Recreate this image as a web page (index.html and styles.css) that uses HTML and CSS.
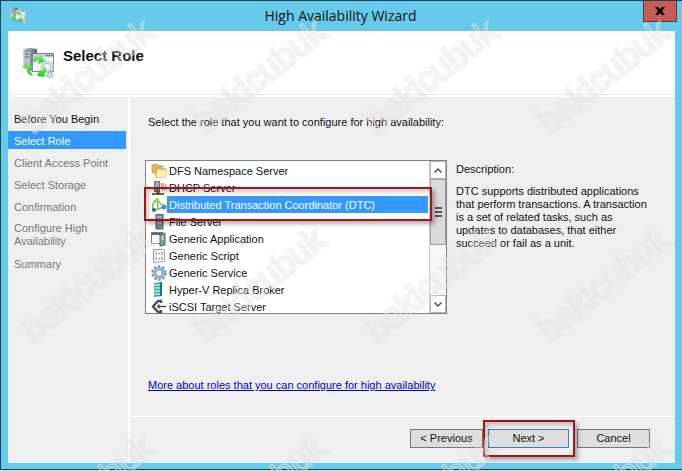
FILE: index.html
```html
<!DOCTYPE html>
<html lang="en">
<head>
    <meta charset="UTF-8">
    <meta name="viewport" content="width=device-width, initial-scale=1.0">
    <title>High Availability Wizard</title>
    <link rel="stylesheet" href="styles.css">
</head>
<body>
<div class="window">
    <div class="titlebar">
        <svg class="title-icon" viewBox="0 0 32 32"><use href="#wizard-icon"/></svg>
        <span class="title">High Availability Wizard</span>
        <button type="button" class="close" aria-label="Close">
            <svg width="10" height="8" viewBox="0 0 10 8"><path d="M0 0h3l2 2 2-2h3L7 4l3 4H7L5 6 3 8H0l3-4z" fill="#000"/></svg>
        </button>
    </div>

    <div class="content">
        <header class="header">
            <svg class="header-icon" viewBox="0 0 32 32">
                <defs>
                    <linearGradient id="metal"><stop offset="0" stop-color="#d5d9dc"/><stop offset="0.5" stop-color="#8d969e"/><stop offset="1" stop-color="#59636d"/></linearGradient>
                    <linearGradient id="green" x2="0" y2="1"><stop offset="0" stop-color="#8cf06a"/><stop offset="1" stop-color="#22c322"/></linearGradient>
                </defs>
                <g id="wizard-icon">
                    <path d="M1 2l7-1 7 1v21l-6 1-8-3z" fill="url(#metal)"/>
                    <path d="M2 3h6v18l-6-1z" fill="#bcc3c9"/>
                    <path d="M3 4h4M3 7h4M3 10h4" stroke="#555f68"/>
                    <rect x="10.500" y="6.500" width="21" height="18" fill="#f7f9fc" stroke="#7d8594"/>
                    <path d="M11 7h20v3H11z" fill="#c5cfe2"/>
                    <path d="M24 8.500h1.500M26.500 8.500h1.500M29 8.500h1.500" stroke="#4b556b" stroke-width="1.500"/>
                    <circle cx="25" cy="20" r="4" fill="none" stroke="#c3d2e1" stroke-width="2.500"/>
                    <circle cx="25" cy="20" r="6" fill="none" stroke="#b4c5d6" stroke-width="1.600" stroke-dasharray="2 1.500"/>
                    <circle cx="28" cy="28" r="2.500" fill="#e8eef4" stroke="#9fb2c6" stroke-width="2" stroke-dasharray="2 1"/>
                    <path d="M11 11c3-2 5-2 7-1l1-2 4 6-7 3 1-3c-2-1-3 0-5 2z" fill="url(#green)"/>
                    <path d="M11 29c-5-1-7-4-6-8l-5 0 5-6 6 6-3 0c0 3 1 5 3 8z" fill="url(#green)"/>
                    <path d="M24 19c1 4 0 7-2 9l2 2-9-1 3-7 1 2c2-1 3-3 5-5z" fill="url(#green)"/>
                </g>
            </svg>
            <h1>Select Role</h1>
        </header>

        <div class="columns">
            <nav class="steps">
                <ol>
                    <li class="done">Before You Begin</li>
                    <li class="active" aria-current="step">Select Role</li>
                    <li>Client Access Point</li>
                    <li>Select Storage</li>
                    <li>Confirmation</li>
                    <li class="two-lines">Configure High<br>Availability</li>
                    <li>Summary</li>
                </ol>
            </nav>

            <div class="page">
                <main class="main">
                    <p class="prompt" id="prompt">Select the role that you want to configure for high availability:</p>
                    <div class="role-area">
                        <div class="list-wrap">
                            <div class="list" role="radiogroup" aria-labelledby="prompt">
                                <div class="roles">
                                    <label class="role">
                                        <input type="radio" name="role">
                                        <svg viewBox="0 0 16 16"><path d="M1 2l5-1 1 2h3v7H1z" fill="#e9b94a" stroke="#b98b2d" stroke-width="0.600"/><path d="M5 6l4-1 1 1h5v8H5z" fill="#fbe28c" stroke="#bb8f35" stroke-width="0.800"/><path d="M6 8h9v6H6z" fill="#fff0af"/><path d="M8 3h4v3" fill="none" stroke="#7795b8"/></svg>
                                        <span>DFS Namespace Server</span>
                                    </label>
                                    <label class="role">
                                        <input type="radio" name="role">
                                        <svg viewBox="0 0 16 16"><path d="M3 1h6v11H3z" fill="#717c84"/><path d="M4 3h4M4 5h4M4 7h4" stroke="#d5dadd"/><path d="M1 14h12" stroke="#8c6924" stroke-width="2"/><path d="M7 11v4" stroke="#5b4a2d" stroke-width="3"/><path d="M10 3l2 7M12 3l1 6M15 4l-1 6" stroke="#d56a39"/></svg>
                                        <span>DHCP Server</span>
                                    </label>
                                    <label class="role selected">
                                        <input type="radio" name="role" checked>
                                        <svg viewBox="0 0 16 16"><path d="M6 3C2 5 1 8 2 12M6 3l7 7M4 13l9-3M6 3l1 8" fill="none" stroke="#72b944" stroke-width="1.400"/><circle cx="6" cy="3" r="2" fill="#8bd34a"/><circle cx="3" cy="13" r="2" fill="#2c6fad"/><circle cx="13" cy="10" r="2.500" fill="#3a9cad"/></svg>
                                        <span>Distributed Transaction Coordinator (DTC)</span>
                                    </label>
                                    <label class="role">
                                        <input type="radio" name="role">
                                        <svg viewBox="0 0 16 16"><path d="M5 0h7v15H5z" fill="#77858f" stroke="#4a565f"/><path d="M6 3h5M6 6h5M6 9h5" stroke="#dbe2e6"/><path d="M9 12h2v2H9z" fill="#56bd47"/></svg>
                                        <span>File Server</span>
                                    </label>
                                    <label class="role">
                                        <input type="radio" name="role">
                                        <svg viewBox="0 0 16 16"><rect x="0.500" y="1.500" width="11" height="11" fill="#fff" stroke="#6c7c88"/><path d="M1 3h10" stroke="#52687c" stroke-width="2"/><path d="M9 3l5-1v12l-5 1z" fill="#8b9ba6" stroke="#52626d"/><path d="M10 6h3M10 8h3" stroke="#e9eef1"/><path d="M11 12h2" stroke="#4fc444" stroke-width="2"/></svg>
                                        <span>Generic Application</span>
                                    </label>
                                    <label class="role">
                                        <input type="radio" name="role">
                                        <svg viewBox="0 0 16 16"><path d="M2.500 1.500h10l1 1v11l-11 1z" fill="#fafafa" stroke="#9ba2a6"/><path d="M6 4L4 5.500 6 7M10 4l2 1.500L10 7M6 9l-2 1.500L6 12M10 9l2 1.500-2 1.500M7 5.500h2M7 10.500h2" fill="none" stroke="#777" stroke-width="0.800"/></svg>
                                        <span>Generic Script</span>
                                    </label>
                                    <label class="role">
                                        <input type="radio" name="role">
                                        <svg viewBox="0 0 16 16"><circle cx="8" cy="8" r="6.500" fill="none" stroke="#7396b4" stroke-width="2.600" stroke-dasharray="2.500 1.600"/><circle cx="8" cy="8" r="4.400" fill="none" stroke="#8fb2cf" stroke-width="2.800"/><circle cx="8" cy="8" r="2.800" fill="#fff" stroke="#668aa9" stroke-width="0.600"/></svg>
                                        <span>Generic Service</span>
                                    </label>
                                    <label class="role">
                                        <input type="radio" name="role">
                                        <svg viewBox="0 0 16 16"><path d="M3 1l8-1v14l-8 1z" fill="#37a7b3"/><path d="M3 3h6M3 6h6M3 9h6M3 12h6" stroke="#b8edf0" stroke-width="1.400"/><path d="M9 0h2v14H9z" fill="#23727c"/></svg>
                                        <span>Hyper-V Replica Broker</span>
                                    </label>
                                    <label class="role">
                                        <input type="radio" name="role">
                                        <svg viewBox="0 0 16 16"><path d="M10 4V2H7L2 7.500 7 13h3v-2" fill="none" stroke="#4b4b4b" stroke-width="2.400"/><path d="M6 7.500h9M8 5.500v4" stroke="#4b4b4b" stroke-width="1.600"/></svg>
                                        <span>iSCSI Target Server</span>
                                    </label>
                                </div>
                                <div class="scrollbar">
                                    <button type="button" aria-label="Scroll up"><svg width="8" height="5" viewBox="0 0 8 5"><path d="M0.500 4.500L4 1l3.500 3.500" fill="none" stroke="#505050" stroke-width="1.500"/></svg></button>
                                    <div class="thumb"></div>
                                    <button type="button" aria-label="Scroll down"><svg width="8" height="5" viewBox="0 0 8 5"><path d="M0.500 0.500L4 4 7.500 0.500" fill="none" stroke="#505050" stroke-width="1.500"/></svg></button>
                                </div>
                            </div>
                            <div class="callout callout-role"></div>
                        </div>
                        <section class="description">
                            <h2>Description:</h2>
                            <p>DTC supports distributed applications<br>that perform transactions. A transaction<br>is a set of related tasks, such as<br>updates to databases, that either<br>succeed or fail as a unit.</p>
                        </section>
                    </div>
                    <a class="more" href="#">More about roles that you can configure for high availability</a>
                </main>
                <footer class="footer">
                    <button type="button" class="btn">&lt; Previous</button>
                    <div class="next-wrap">
                        <button type="button" class="btn btn-next">Next &gt;</button>
                        <div class="callout callout-next"></div>
                    </div>
                    <button type="button" class="btn">Cancel</button>
                </footer>
            </div>
        </div>
    </div>
</div>

<svg class="watermark" aria-hidden="true">
    <defs>
        <pattern id="mark" x="10" y="0" width="172" height="208" patternUnits="userSpaceOnUse">
            <g transform="translate(23 135) rotate(-39)">
                <text class="mark-edge" x="0" y="0">bakicubuk</text>
                <text class="mark-light" x="0" y="0">bakicubuk</text>
            </g>
        </pattern>
    </defs>
    <rect width="100%" height="100%" fill="url(#mark)"/>
</svg>
</body>
</html>
```

FILE: styles.css
```css
* {
    margin: 0;
    padding: 0;
    box-sizing: border-box;
}

body {
    min-height: 100vh;
    display: flex;
    flex-direction: column;
    position: relative;
    overflow-x: hidden;
    background-color: #d5d9dc;
    font-family: "Liberation Sans", Arial, sans-serif;
    font-size: 11px;
    line-height: 13px;
    color: #111;
}

button {
    font: inherit;
    color: inherit;
}

/* Window frame */
.window {
    flex: 1;
    display: flex;
    flex-direction: column;
    margin-bottom: 1px;
    padding: 0 7px 6px;
    background-color: #66caea;
    border: 1px solid #1d4355;
    border-right: 0;
}

.titlebar {
    height: 30px;
    display: flex;
    align-items: flex-start;
    justify-content: space-between;
}

.title-icon {
    width: 16px;
    height: 16px;
    margin: 6px 12px 0 2px;
}

.title {
    font-family: "Open Sans", "Noto Sans", sans-serif;
    font-size: 14px;
    line-height: 30px;
}

.close {
    width: 34px;
    height: 21px;
    margin-right: -2px;
    background-color: #c75c54;
    border: 1px solid #6b3434;
    border-top: 0;
}

.content {
    flex: 1;
    display: flex;
    flex-direction: column;
    background-color: #fff;
}

.header {
    height: 64px;
    display: flex;
    align-items: center;
    padding-left: 14px;
    gap: 9px;
    border-bottom: 1px solid #e6e6e6;
}

.header-icon {
    width: 32px;
    height: 32px;
}

.header h1 {
    font-size: 15px;
    line-height: 18px;
    padding-bottom: 14px;
}

/* Steps on the left, page on the right */
.columns {
    flex: 1;
    display: flex;
    gap: 2px;
    margin-top: 2px;
}

.steps {
    width: 120px;
    padding: 12px 2px 0 0;
    background-color: #efefef;
    color: #777;
}

.steps ol {
    list-style: none;
}

.steps li {
    padding: 2px 6px 0;
    margin-bottom: 4px;
    line-height: 16px;
}

.steps .done {
    color: #111;
}

.steps .active {
    background-color: #3399ff;
    color: #fff;
}

.steps .two-lines {
    padding: 3px 6px 2px;
    line-height: 13px;
}

.page {
    flex: 1;
    display: flex;
    flex-direction: column;
    gap: 1px;
}

.main {
    flex: 1;
    padding: 19px 15px 23px;
    background-color: #efefef;
}

.prompt {
    padding-left: 3px;
}

.role-area {
    display: flex;
    gap: 9px;
    margin-top: 31px;
}

.list-wrap {
    position: relative;
    flex: 0 0 302px;
}

.list {
    height: 154px;
    display: flex;
    overflow: hidden;
    background-color: #fff;
    border: 1px solid #7d828a;
}

.roles {
    flex: 1;
    padding-top: 1px;
}

.role {
    display: flex;
    align-items: center;
    height: 17px;
    padding: 0 1px 0 5px;
}

.role input {
    appearance: none;
    width: 0;
    height: 0;
}

.role svg {
    flex: none;
    width: 16px;
    height: 16px;
}

.role span {
    flex: 1;
    padding: 2px 0 0 2px;
    line-height: 15px;
}

.role.selected span {
    background-color: #3399ff;
    color: #fff;
}

.scrollbar {
    width: 17px;
    display: flex;
    flex-direction: column;
    justify-content: space-between;
    background-color: #f7f7f7;
    border-left: 1px solid #c8c8c8;
}

.scrollbar button {
    height: 18px;
    display: flex;
    align-items: center;
    justify-content: center;
    background-color: #fff;
    border: 1px solid #b4b4b4;
}

.thumb {
    height: 66px;
    margin-bottom: 50px;
    background: repeating-linear-gradient(#555 0 2px, #dadada 2px 4px) center / 7px 10px no-repeat #dadada;
    border: 1px solid #a5a5a5;
}

/* Red frames round the things to click */
.callout {
    position: absolute;
    border: 2px solid #a51218;
    box-shadow: 3px 3px 4px rgba(0, 0, 0, 0.3), inset 3px 3px 4px rgba(0, 0, 0, 0.2);
    pointer-events: none;
}

.callout-role {
    top: 27px;
    left: -1px;
    right: 15px;
    height: 34px;
}

.callout-next {
    inset: -9px -6px -9px -5px;
}

.description {
    flex: 1;
    padding-top: 3px;
}

.description h2 {
    margin-bottom: 9px;
    font-size: 11px;
    font-weight: normal;
}

.more {
    display: inline-block;
    margin: 65px 0 0 3px;
    color: #0000c8;
}

.footer {
    display: flex;
    justify-content: flex-end;
    padding: 12px 25px 15px;
    background-color: #efefef;
}

.btn {
    width: 73px;
    height: 19px;
    background-color: #dedede;
    border: 1px solid #777;
}

.next-wrap {
    position: relative;
    margin: 0 8px 0 5px;
}

.btn-next {
    width: 81px;
    border-color: #3c7fb1;
}

.watermark {
    position: absolute;
    inset: 0;
    width: 100%;
    height: 100%;
    pointer-events: none;
}

.watermark text {
    font-family: "Liberation Sans", Arial, sans-serif;
    font-size: 35px;
    fill: none;
}

.mark-edge {
    stroke: rgba(130, 130, 130, 0.14);
    stroke-width: 3px;
}

.mark-light {
    stroke: rgba(255, 255, 255, 0.4);
    stroke-width: 2px;
}
```
